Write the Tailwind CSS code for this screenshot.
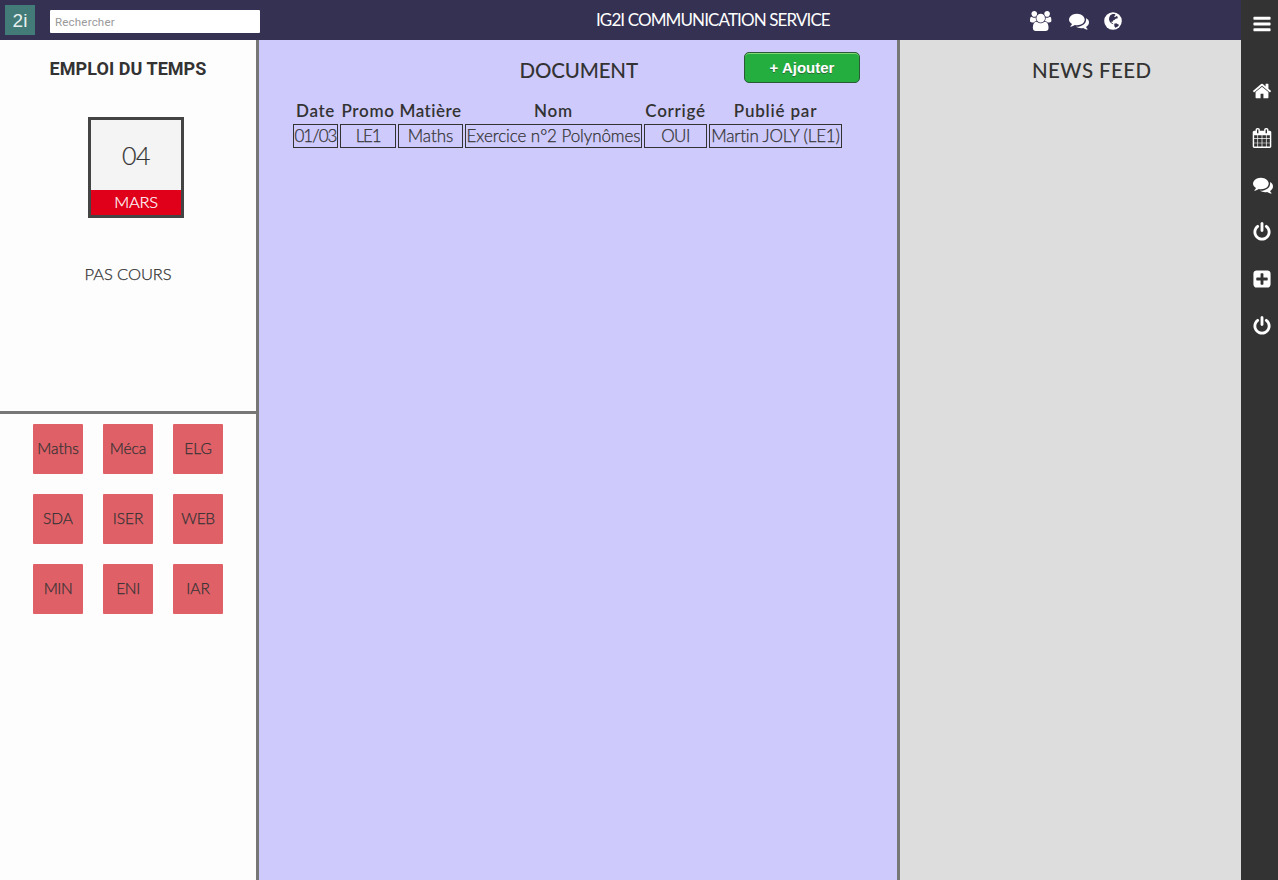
<!DOCTYPE html>
<html lang="fr">
<head>
<meta charset="utf-8">
<title>IG2I Communication Service</title>
<script src="https://cdn.jsdelivr.net/npm/@tailwindcss/browser@4"></script>
</head>
<body class="flex h-[880px] w-[1278px] overflow-hidden bg-[#fdfdfd] font-['Lato',sans-serif] text-[#333]">
<svg class="hidden">
  <symbol id="comments" viewBox="0 0 1792 1792"><path d="M1408 768q0 139-94 257t-256.5 186.5-353.5 68.5q-86 0-176-16-124 88-278 128-36 9-86 16h-3q-11 0-20.5-8t-11.5-21q-1-3-1-6.5t.5-6.5 2-6l2.500-5 3.500-5.500 4-5 4.500-5 4-4.500q5-6 23-25t26-29.500 22.500-29 25-38.500 20.500-44q-124-72-195-177t-71-224q0-139 94-257t256.500-186.500 353.500-68.500 353.500 68.500 256.500 186.500 94 257zm384 256q0 120-71 224.500t-195 176.500q10 24 20.500 44t25 38.500 22.500 29 26 29.500 23 25q1 1 4 4.500t4.500 5 4 5 3.500 5.500l2.500 5 2 6 .5 6.500-1 6.500q-3 14-13 22t-22 7q-50-7-86-16-154-40-278-128-90 16-176 16-271 0-472-132 58 4 88 4 161 0 309-45t264-129q125-92 192-212t67-254q0-77-23-152 129 71 204 178t75 230z"/></symbol>
  <symbol id="power" viewBox="0 0 1792 1792"><path d="M1664 896q0 156-61 298t-164 245-245 164-298 61-298-61-245-164-164-245-61-298q0-182 80.5-343t226.500-270q43-32 95.500-25t83.500 50q32 42 24.500 94.500t-49.500 84.500q-98 74-151.500 181t-53.500 228q0 104 40.500 198.500t109.500 163.500 163.500 109.500 198.500 40.500 198.500-40.500 163.500-109.500 109.500-163.500 40.500-198.500q0-121-53.500-228t-151.500-181q-42-32-49.500-84.500t24.500-94.500q31-43 84-50t95 25q146 109 226.500 270t80.500 343zm-640-768v640q0 52-38 90t-90 38-90-38-38-90v-640q0-52 38-90t90-38 90 38 38 90z"/></symbol>
</svg>
<div class="flex w-[1241px] flex-col">
  <header class="flex h-10 shrink-0 bg-[#343152] text-white">
    <div class="mt-[5px] ml-[5px] flex size-[30px] items-center justify-center bg-[#427b77] font-['Liberation_Sans',sans-serif] text-[19px] leading-none text-[#e8f0ef]">2i</div>
    <div class="mt-[10px] ml-[15px] flex h-[23px] w-[210px] items-center rounded-[1px] bg-white pt-[3px] pl-[5px] font-['Roboto',sans-serif] text-[11.500px] tracking-[0.200px] text-[#999]">Rechercher</div>
    <h1 class="mt-[8px] ml-[336px] w-[434px] text-[17px] leading-6 tracking-[-0.890px] whitespace-nowrap">IG2I COMMUNICATION SERVICE</h1>
    <div class="mt-[11px] ml-[0.200px] flex">
      <svg class="h-5 w-[21.4px] fill-white" viewBox="0 0 1920 1792"><path d="M593 896q-162 5-265 128h-134q-82 0-138-40.500t-56-118.500q0-353 124-353 6 0 43.500 21t97.500 42.500 119 21.500q67 0 133-23-5 37-5 66 0 139 81 256zm1071 637q0 120-73 189.500t-194 69.500h-874q-121 0-194-69.500t-73-189.500q0-53 3.500-103.500t14-109 26.500-108.500 43-97.500 62-81 85.500-53.500 111.500-20q10 0 43 21.500t73 48 107 48 135 21.500 135-21.500 107-48 73-48 43-21.500q61 0 111.500 20t85.500 53.500 62 81 43 97.500 26.500 108.500 14 109 3.500 103.500zm-1024-1277q0 106-75 181t-181 75-181-75-75-181 75-181 181-75 181 75 75 181zm704 384q0 159-112.500 271.500t-271.500 112.500-271.500-112.500-112.500-271.500 112.500-271.500 271.500-112.500 271.500 112.500 112.500 271.500zm576 225q0 78-56 118.500t-138 40.500h-134q-103-123-265-128 81-117 81-256 0-29-5-66 66 23 133 23 59 0 119-21.500t97.500-42.500 43.500-21q124 0 124 353zm-128-609q0 106-75 181t-181 75-181-75-75-181 75-181 181-75 181 75 75 181z"/></svg>
      <svg class="ml-[17px] size-5 fill-white"><use href="#comments"/></svg>
      <svg class="ml-[14.300px] size-5" viewBox="0 0 20 20"><circle cx="10" cy="10" r="8.800" fill="#fff"/><path fill="#343152" d="M7.300 4.200 9.500 3l2.300.1.700 1-1.400 1.200.9 1 1.300-1.300 1.200.6.300 1.600-2 .5-1.500 1.400-1.300.3-.2 1.300-1.300-.3.100 1.300 1.300.5.400 1.100-1.700-.8L6.900 11 6 8.500l.2-2zM11.200 12.800l2-.5 2.200 1.200.7.400-1.600 1.800-2.300 1-.8-1.500z"/></svg>
    </div>
  </header>
  <main class="flex flex-1">
    <aside class="flex w-[259px] flex-col border-r-3 border-[#777]">
      <section class="flex h-[374px] flex-col items-center border-b-3 border-[#777]">
        <h2 class="mt-[17px] font-['Roboto',sans-serif] text-[18px] leading-6 font-bold tracking-[0.050px]">EMPLOI DU TEMPS</h2>
        <div class="mt-9 ml-4 flex h-[101px] w-24 flex-col border-3 border-[#444] bg-[#f4f4f4] text-center">
          <div class="h-[70px] text-[25px] leading-[70px] font-light tracking-[-0.500px] [-webkit-text-stroke:0.2px]">04</div>
          <div class="h-[25px] bg-[#e1001a] text-[16.500px] leading-[25px] font-light tracking-[-0.300px] text-white [-webkit-text-stroke:0.2px]">MARS</div>
        </div>
        <p class="mt-[44px] text-[16.500px] leading-6 font-light tracking-[-0.080px] [-webkit-text-stroke:0.25px]">PAS COURS</p>
      </section>
      <section class="mt-[10px] ml-[33px] grid grid-cols-[50px_50px_50px] gap-5 text-[15.500px] leading-6 font-light [-webkit-text-stroke:0.25px]">
        <div class="flex h-[50px] items-center justify-center rounded-[1px] bg-[#e06068] pb-[2px]">Maths</div>
        <div class="flex h-[50px] items-center justify-center rounded-[1px] bg-[#e06068] pb-[2px]">Méca</div>
        <div class="flex h-[50px] items-center justify-center rounded-[1px] bg-[#e06068] pb-[2px]">ELG</div>
        <div class="flex h-[50px] items-center justify-center rounded-[1px] bg-[#e06068] pb-[2px]">SDA</div>
        <div class="flex h-[50px] items-center justify-center rounded-[1px] bg-[#e06068] pb-[2px]">ISER</div>
        <div class="flex h-[50px] items-center justify-center rounded-[1px] bg-[#e06068] pb-[2px] tracking-[-0.400px]">WEB</div>
        <div class="flex h-[50px] items-center justify-center rounded-[1px] bg-[#e06068] pb-[2px] tracking-[-0.400px]">MIN</div>
        <div class="flex h-[50px] items-center justify-center rounded-[1px] bg-[#e06068] pb-[2px] tracking-[-0.400px]">ENI</div>
        <div class="flex h-[50px] items-center justify-center rounded-[1px] bg-[#e06068] pb-[2px]">IAR</div>
      </section>
    </aside>
    <section class="w-[641px] border-r-3 border-[#777] bg-[#cecafb]">
      <div class="flex h-[58px]">
        <h2 class="mt-[18px] ml-[260.500px] w-[224.500px] text-[20.500px] leading-6 font-medium tracking-[-0.150px]">DOCUMENT</h2>
        <button class="mt-3 h-[31px] w-[116px] rounded-[5px] border border-[#2b5a37] bg-[#24ae40] pt-px font-['Liberation_Sans',sans-serif] text-[15px] font-bold text-white shadow-[inset_0_1px_0_#84d875] [text-shadow:0_1px_0_#2b6a37]">+ Ajouter</button>
      </div>
      <table class="ml-8 w-[553px] table-fixed border-separate border-spacing-x-[2px] border-spacing-y-0 text-center whitespace-nowrap">
        <colgroup><col class="w-[45px]"><col class="w-[56px]"><col class="w-[65px]"><col class="w-[177px]"><col class="w-[63px]"><col class="w-[133px]"></colgroup>
        <thead><tr class="h-[26px] text-[17px] leading-[26px]">
          <th class="p-0 font-semibold tracking-[0.650px]">Date</th>
          <th class="p-0 font-semibold tracking-[0.700px]">Promo</th>
          <th class="p-0 font-semibold tracking-[0.500px]">Matière</th>
          <th class="p-0 font-semibold tracking-[0.800px]">Nom</th>
          <th class="p-0 font-semibold tracking-[0.700px]">Corrigé</th>
          <th class="p-0 font-semibold tracking-[0.800px]">Publié par</th>
        </tr></thead>
        <tbody><tr class="h-6 text-[17px] leading-[22px] font-light [-webkit-text-stroke:0.25px]">
          <td class="border border-[#333] p-0 tracking-[-0.950px]">01/03</td>
          <td class="border border-[#333] p-0 tracking-[-1.200px]">LE1</td>
          <td class="border border-[#333] p-0">Maths</td>
          <td class="border border-[#333] p-0 tracking-[-0.080px]">Exercice n°2 Polynômes</td>
          <td class="border border-[#333] p-0 tracking-[-0.500px]">OUI</td>
          <td class="border border-[#333] p-0 tracking-[-0.150px]">Martin JOLY (LE1)</td>
        </tr></tbody>
      </table>
    </section>
    <section class="flex-1 bg-[#ddd]">
      <h2 class="mt-[18px] ml-[132px] text-[20.500px] leading-6 font-medium tracking-[0.400px]">NEWS FEED</h2>
    </section>
  </main>
</div>
<nav class="flex w-[37px] flex-col bg-[#333] pl-[10.600px]">
  <svg class="mt-[13.500px] size-5 shrink-0 fill-white" viewBox="0 0 1792 1792"><path d="M1664 1344v128q0 26-19 45t-45 19h-1408q-26 0-45-19t-19-45v-128q0-26 19-45t45-19h1408q26 0 45 19t19 45zm0-512v128q0 26-19 45t-45 19h-1408q-26 0-45-19t-19-45v-128q0-26 19-45t45-19h1408q26 0 45 19t19 45zm0-512v128q0 26-19 45t-45 19h-1408q-26 0-45-19t-19-45v-128q0-26 19-45t45-19h1408q26 0 45 19t19 45z"/></svg>
  <div class="mt-[47.500px] flex flex-col gap-[27px]">
    <svg class="ml-[0.500px] size-5 fill-white" viewBox="0 0 1792 1792"><path d="M1472 992v480q0 26-19 45t-45 19h-384v-384h-256v384h-384q-26 0-45-19t-19-45v-480q0-1 .5-3t.5-3l575-474 575 474q1 2 1 6zm223-69l-62 74q-8 9-21 11h-3q-13 0-21-7l-692-577-692 577q-12 8-24 7-13-2-21-11l-62-74q-8-10-7-23.500t11-21.500l719-599q32-26 76-26t76 26l244 204v-195q0-14 9-23t23-9h192q14 0 23 9t9 23v408l219 182q10 8 11 21.500t-7 23.500z"/></svg>
    <svg class="ml-[0.700px] size-5 fill-white" viewBox="0 0 1792 1792"><path d="M192 1664h288v-288h-288v288zm352 0h320v-288h-320v288zm-352-352h288v-320h-288v320zm352 0h320v-320h-320v320zm-352-384h288v-288h-288v288zm736 736h320v-288h-320v288zm-384-736h320v-288h-320v288zm768 736h288v-288h-288v288zm-384-352h320v-320h-320v320zm-352-864v-288q0-13-9.500-22.500t-22.500-9.500h-64q-13 0-22.500 9.500t-9.500 22.500v288q0 13 9.500 22.500t22.500 9.500h64q13 0 22.500-9.500t9.500-22.500zm736 864h288v-320h-288v320zm-384-384h320v-288h-320v288zm384 0h288v-288h-288v288zm32-480v-288q0-13-9.500-22.500t-22.500-9.500h-64q-13 0-22.500 9.500t-9.500 22.500v288q0 13 9.500 22.500t22.500 9.500h64q13 0 22.500-9.500t9.500-22.500zm384-64v1280q0 52-38 90t-90 38h-1408q-52 0-90-38t-38-90v-1280q0-52 38-90t90-38h128v-96q0-66 47-113t113-47h64q66 0 113 47t47 113v96h384v-96q0-66 47-113t113-47h64q66 0 113 47t47 113v96h128q52 0 90 38t38 90z"/></svg>
    <svg class="ml-[1.400px] size-5 fill-white"><use href="#comments"/></svg>
    <svg class="size-5 fill-white"><use href="#power"/></svg>
    <svg class="size-5 fill-white" viewBox="0 0 1792 1792"><path d="M1408 960v-128q0-26-19-45t-45-19h-320v-320q0-26-19-45t-45-19h-128q-26 0-45 19t-19 45v320h-320q-26 0-45 19t-19 45v128q0 26 19 45t45 19h320v320q0 26 19 45t45 19h128q26 0 45-19t19-45v-320h320q26 0 45-19t19-45zm256-544v960q0 119-84.500 203.500t-203.500 84.500h-960q-119 0-203.500-84.500t-84.500-203.500v-960q0-119 84.500-203.500t203.500-84.500h960q119 0 203.500 84.500t84.500 203.500z"/></svg>
    <svg class="size-5 fill-white"><use href="#power"/></svg>
  </div>
</nav>
</body>
</html>
